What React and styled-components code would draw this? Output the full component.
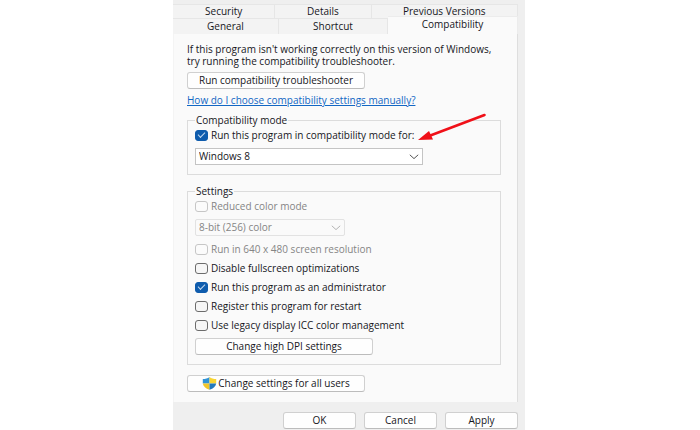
import React, { useState } from "react";
import styled, { createGlobalStyle } from "styled-components";

const GlobalStyle = createGlobalStyle`
  * {
    box-sizing: border-box;
  }
  body {
    margin: 0;
    background: #ffffff;
  }
  body, button, select, input {
    font-family: "Open Sans", "Liberation Sans", sans-serif;
    font-size: 10px;
    line-height: 11px;
    color: #16161c;
  }
`;

const Page = styled.main`
  display: flex;
  justify-content: center;
  min-height: 100vh;
  padding-right: 2px;
`;
const Dialog = styled.div`
  width: 100%;
  max-width: 352px;
  padding: 4px 7px 1px 0;
  background: #efefef;
`;
const TabRow = styled.div`
  display: grid;
  grid-template-columns: ${({ $columns }) => $columns};
  height: ${({ $height }) => $height};
`;
const Tab = styled.button`
  padding: 0;
  border: 1px solid #e6e6e6;
  border-left-width: 0;
  border-bottom-width: 0;
  background: #f3f3f3;
  &[aria-selected="true"] {
    margin-top: -2px;
    padding-bottom: 2px;
    border-color: #ececec;
    background: #fafafa;
  }
`;
const Panel = styled.section`
  display: flex;
  flex-direction: column;
  align-items: flex-start;
  padding: 9px 16px 10px 13px;
  border-right: 1px solid #dedede;
  border-left: 1px solid #f4f4f4;
  background: #fafafa;
`;
const Intro = styled.p`
  margin: 0 0 5px;
  line-height: 12px;
`;
const Button = styled.button`
  display: flex;
  align-items: center;
  justify-content: center;
  gap: 1px;
  width: ${({ $width }) => $width || "100%"};
  height: 17px;
  padding: 0;
  border: 1px solid #d0d0d0;
  border-bottom-color: #bcbcbc;
  border-radius: 3px;
  background: #fefefe;
`;
const HelpLink = styled.a`
  margin: 6px 0 9px;
  color: #1267c4;
  text-decoration: underline;
`;
const Group = styled.fieldset`
  position: relative;
  align-self: stretch;
  min-width: 0;
  margin: 0 0 ${({ $gap }) => $gap};
  padding: 3px 8px 9px 7px;
  border: 1px solid #dcdcdc;
`;
const Legend = styled.legend`
  padding: 0 1px;
`;
const Stack = styled.div`
  display: flex;
  flex-direction: column;
  align-items: flex-start;
  gap: 7px;
`;
const CheckLabel = styled.label`
  display: flex;
  align-items: center;
  gap: 3px;
  height: 12px;
  color: ${({ $disabled }) => ($disabled ? "#858585" : "inherit")};
`;
const Box = styled.input`
  display: grid;
  place-items: center;
  appearance: none;
  width: 13px;
  height: 11px;
  margin: 0;
  border: 1px solid #6c6c6c;
  border-radius: 3px;
  background: #f6f6f6;
  &:disabled {
    border-color: #c6c6c6;
    background: #fbfbfb;
  }
  &:checked {
    border-color: #0f5cad;
    background: #0f5cad;
  }
  &:checked::after {
    content: "";
    width: 6px;
    height: 3px;
    margin-top: -2px;
    border: solid #c4daf0;
    border-width: 0 0 1px 1px;
    transform: rotate(-45deg);
  }
`;
const SelectWrap = styled.div`
  display: grid;
  align-items: center;
  width: ${({ $width }) => $width};
  > * {
    grid-area: 1 / 1;
  }
  > svg {
    justify-self: end;
    margin-right: 4px;
    pointer-events: none;
  }
`;
const Select = styled.select`
  appearance: none;
  width: 100%;
  height: 17px;
  padding: 0 20px 0 3px;
  border: 1px solid #c4c4c4;
  border-radius: 0;
  background: #ffffff;
  &:disabled {
    border-color: #e2e2e2;
    border-radius: 2px;
    background: #fafafa;
    color: #858585;
    opacity: 1;
  }
`;
const Arrow = styled.svg`
  position: absolute;
  top: -14px;
  right: 13px;
`;
const Footer = styled.footer`
  display: flex;
  justify-content: flex-end;
  gap: 8px;
  padding-top: 10px;
`;

const Chevron = ({ color = "#555555" }) => (
  <svg width="10" height="6" viewBox="0 0 10 6" fill="none" aria-hidden="true">
    <path d="M0.8 0.8 L5 4.6 L9.2 0.8" stroke={color} strokeWidth="1" />
  </svg>
);

const Shield = () => (
  <svg width="15" height="13" viewBox="0 0 15 13" aria-hidden="true">
    <path d="M7.5 0 C5.6 1.5 3.4 2 0.8 2 V6.5 H7.5 Z" fill="#3093d6" />
    <path d="M7.5 0 C9.4 1.5 11.6 2 14.2 2 V6.5 H7.5 Z" fill="#f8d533" />
    <path d="M0.8 6.5 C1.3 9.3 3.6 11.5 7.5 12.8 V6.5 Z" fill="#f2c62a" />
    <path d="M14.2 6.5 C13.7 9.3 11.4 11.5 7.5 12.8 V6.5 Z" fill="#2379bd" />
  </svg>
);

const Check = ({ label, checked = false, disabled }) => {
  const [on, setOn] = useState(checked);
  return (
    <CheckLabel $disabled={disabled}>
      <Box
        type="checkbox"
        checked={on}
        disabled={disabled}
        onChange={(e) => setOn(e.target.checked)}
      />
      {label}
    </CheckLabel>
  );
};

const App = () => (
  <>
    <GlobalStyle />
    <Page>
      <Dialog>
        <div role="tablist">
          <TabRow $columns="102fr 96fr 146fr" $height="14px">
            <Tab role="tab">Security</Tab>
            <Tab role="tab">Details</Tab>
            <Tab role="tab">Previous Versions</Tab>
          </TabRow>
          <TabRow $columns="106fr 109fr 130fr" $height="16px">
            <Tab role="tab">General</Tab>
            <Tab role="tab">Shortcut</Tab>
            <Tab role="tab" aria-selected="true">
              Compatibility
            </Tab>
          </TabRow>
        </div>
        <Panel>
          <Intro>
            If this program isn't working correctly on this version of Windows,
            <br />
            try running the compatibility troubleshooter.
          </Intro>
          <Button $width="178px">Run compatibility troubleshooter</Button>
          <HelpLink href="#help">
            How do I choose compatibility settings manually?
          </HelpLink>
          <Group $gap="11px">
            <Legend>Compatibility mode</Legend>
            <Stack>
              <Check label="Run this program in compatibility mode for:" checked />
              <SelectWrap $width="228px">
                <Select aria-label="Compatibility mode">
                  <option>Windows 8</option>
                </Select>
                <Chevron />
              </SelectWrap>
            </Stack>
            <Arrow width="70" height="30" viewBox="0 0 70 30" aria-hidden="true">
              <path
                d="M67.5 3 L12 24"
                stroke="#f01018"
                strokeWidth="2.6"
                strokeLinecap="round"
              />
              <path d="M1 28 L12 19 L16 27.5 Z" fill="#f01018" />
            </Arrow>
          </Group>
          <Group $gap="10px">
            <Legend>Settings</Legend>
            <Stack>
              <Check label="Reduced color mode" disabled />
              <SelectWrap $width="150px">
                <Select aria-label="Color mode" disabled>
                  <option>8-bit (256) color</option>
                </Select>
                <Chevron color="#b4b4b4" />
              </SelectWrap>
              <Check label="Run in 640 x 480 screen resolution" disabled />
              <Check label="Disable fullscreen optimizations" />
              <Check label="Run this program as an administrator" checked />
              <Check label="Register this program for restart" />
              <Check label="Use legacy display ICC color management" />
              <Button $width="178px">Change high DPI settings</Button>
            </Stack>
          </Group>
          <Button $width="178px">
            <Shield />
            Change settings for all users
          </Button>
        </Panel>
        <Footer>
          <Button $width="73px">OK</Button>
          <Button $width="73px">Cancel</Button>
          <Button $width="73px">Apply</Button>
        </Footer>
      </Dialog>
    </Page>
  </>
);

export default App;
